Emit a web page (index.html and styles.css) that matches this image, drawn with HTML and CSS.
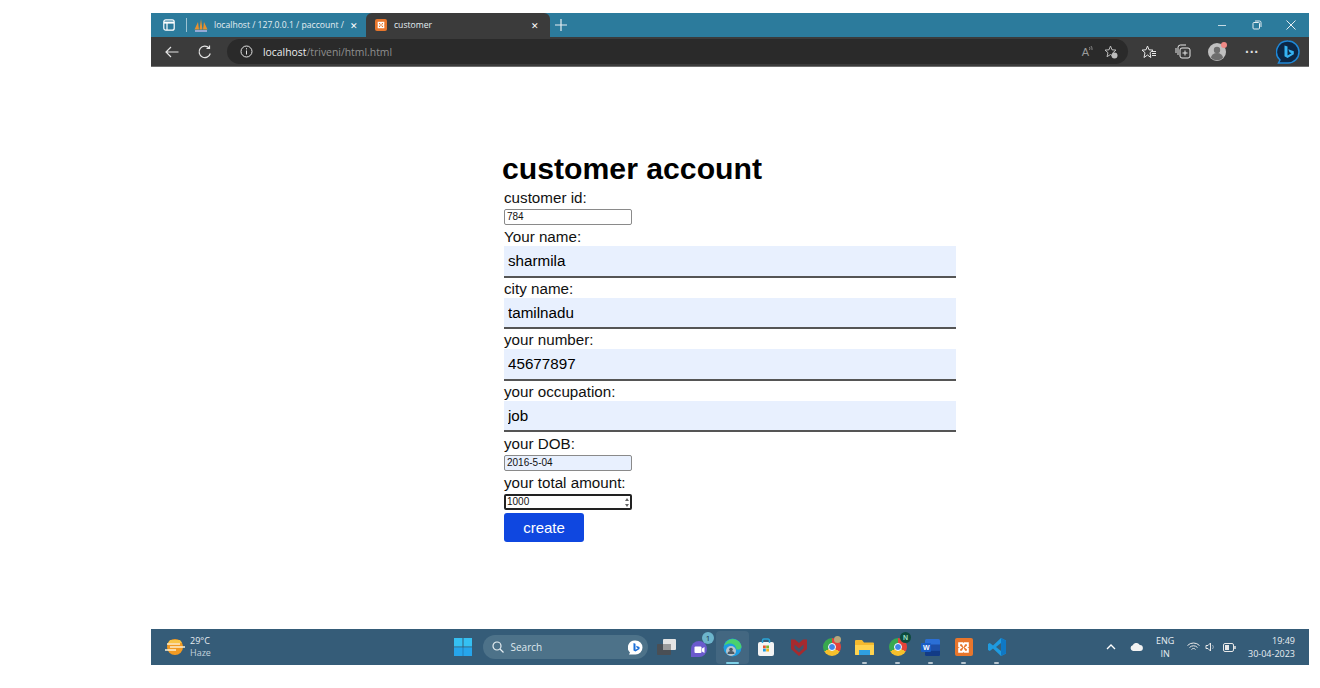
FILE: index.html

```html
<!DOCTYPE html>
<html lang="en">
<head>
  <meta charset="UTF-8">
  <title>customer</title>
  <link rel="stylesheet" href="styles.css">
</head>
<body>
  <div class="screen">
    <div class="tabstrip">
      <svg class="tab-actions" width="12" height="12" viewBox="0 0 12 12" fill="none" stroke="#fff" stroke-width="1.2"><rect x=".8" y=".8" width="10.4" height="10.4" rx="2"/><path d="M1 3.6h10" stroke-width="2"/><path d="M4 4v7"/></svg>
      <span class="tab-sep"></span>
      <div class="tab">
        <svg width="14" height="13" viewBox="0 0 14 13"><path d="M.5 10.500 4 3l1 7.500zM5.500 10.500 7 0l1.500 10.500zM9 10.500 10 3l3.500 7.500z" fill="#e8912d"/><path d="M1 12h12" stroke="#b9b9e8" stroke-width="1.500"/></svg>
        <span class="tab-title">localhost / 127.0.0.1 / paccount /</span>
        <span class="tab-close">✕</span>
      </div>
      <div class="tab tab-active">
        <span class="xampp xampp-small"><svg width="8" height="8" viewBox="0 0 12 12" fill="none" stroke="#fff" stroke-width="2"><path d="M2 2h3l1 2 1-2h3v3L8.500 6 10 7v3H7L6 8l-1 2H2V7l1.500-1L2 5z"/></svg></span>
        <span class="tab-title">customer</span>
        <span class="tab-close">✕</span>
      </div>
      <svg class="new-tab" width="12" height="12" viewBox="0 0 12 12" stroke="#e6eef2" stroke-width="1.200"><path d="M6 0v12M0 6h12"/></svg>
      <div class="win-controls">
        <svg width="10" height="10" viewBox="0 0 10 10" stroke="#c6dbe4"><path d="M1 5.500h8"/></svg>
        <svg width="10" height="10" viewBox="0 0 10 10" fill="none" stroke="#e6eef2"><rect x="1" y="2.500" width="6.500" height="6.500" rx="1"/><path d="M3 1h4.500A1.500 1.500 0 0 1 9 2.500V7"/></svg>
        <svg width="10" height="10" viewBox="0 0 10 10" stroke="#e6eef2"><path d="M.5.500l9 9M9.500.500l-9 9"/></svg>
      </div>
    </div>

    <div class="toolbar">
      <svg class="nav-back" width="14" height="12" viewBox="0 0 14 12" fill="none" stroke="#e4e4e4" stroke-width="1.200"><path d="M13.500 6H1M6 1 1 6l5 5"/></svg>
      <svg class="nav-reload" width="14" height="14" viewBox="0 0 14 14" fill="none" stroke="#e4e4e4" stroke-width="1.200"><path d="M12.300 8.500A5.700 5.700 0 1 1 11 3"/><path d="M11.500.500V3.500H8.500"/></svg>
      <div class="address">
        <svg width="13" height="13" viewBox="0 0 13 13" fill="none" stroke="#e4e4e4"><circle cx="6.500" cy="6.500" r="5.500"/><path d="M6.500 5.500v4M6.500 3.200v1.200"/></svg>
        <span class="url"><b>localhost</b>/triveni/html.html</span>
        <span class="read-aloud">A</span>
        <svg class="aloud-waves" width="4" height="7" viewBox="0 0 4 7" fill="none" stroke="#9a9a9a" stroke-width=".8"><path d="M.5 1a3 3 0 0 1 0 3M2 0a5 5 0 0 1 1 4"/></svg>
        <svg class="fav-add" width="14" height="14" viewBox="0 0 14 14" fill="none" stroke="#bdbdbd"><path d="M6.500 1 8 4.800l4 .3L9 7.700l.8 4-3.300-2.200L3 11.700l1-4L1 5.100l4-.3z"/><circle cx="10.500" cy="10.500" r="3" fill="#bdbdbd" stroke="none"/></svg>
      </div>
      <div class="tools">
        <svg width="16" height="14" viewBox="0 0 16 14" fill="none" stroke="#e8e8e8"><path d="M6.500 1 8 4.800l4 .3L9 7.700l.8 4.800-3.300-2.500L3 12.500l1-4.800L1 5.100l4-.3z"/><path d="M11 6.500h4M11 8.500h4M11 10.500h4"/></svg>
        <svg class="collections" width="16" height="15" viewBox="0 0 16 15" fill="none" stroke="#e8e8e8"><rect x="5" y="4" width="10" height="10" rx="2"/><path d="M10 6.500v5M7.500 9h5M3 11V3.500A2.500 2.500 0 0 1 5.500 1H11M1 9V4"/></svg>
        <span class="avatar"><svg width="18" height="18" viewBox="0 0 18 18"><circle cx="9" cy="9" r="9" fill="#bfbfbf"/><circle cx="9" cy="7" r="3.200" fill="#6d6d6d"/><path d="M3 15a6 5 0 0 1 12 0 9 9 0 0 1-12 0z" fill="#6d6d6d"/></svg><i class="avatar-dot"></i></span>
        <span class="dots">···</span>
        <svg class="bing" width="24" height="24" viewBox="0 0 24 24"><path d="M12 1a11 11 0 0 1 0 22H2.500l1.500-3A11 11 0 0 1 12 1z" fill="#0c2746" stroke="#1e88d8" stroke-width="1.500"/><path d="M8.500 5.500l3 1.100v9l4-2.300-2-1-1.200-3 5.500 2v3l-6.300 3.700-3-1.700z" fill="#35b4f4"/></svg>
      </div>
    </div>

    <main class="page">
      <form class="account-form">
        <h1>customer account</h1>
        <label class="field-label first">customer id:</label>
        <input class="small-input" type="text" value="784">
        <label class="field-label second">Your name:</label>
        <input class="wide-input" type="text" value="sharmila">
        <label class="field-label">city name:</label>
        <input class="wide-input" type="text" value="tamilnadu">
        <label class="field-label">your number:</label>
        <input class="wide-input" type="text" value="45677897">
        <label class="field-label">your occupation:</label>
        <input class="wide-input" type="text" value="job">
        <label class="field-label tall">your DOB:</label>
        <input class="small-input filled" type="text" value="2016-5-04">
        <label class="field-label tall">your total amount:</label>
        <div class="number-wrap">
          <input class="small-input focused" type="text" value="1000">
          <i class="spin-up"></i>
          <i class="spin-down"></i>
        </div>
        <button class="create-btn" type="button">create</button>
      </form>
    </main>

    <div class="taskbar">
      <div class="weather">
        <svg width="20" height="18" viewBox="0 0 20 18"><circle cx="10" cy="9" r="8" fill="#f29a22"/><path d="M5 2h10l2 3H3z" fill="#f8c548"/><path d="M2 6h13M5 9h15M0 12h11" stroke="#fdf0cf" stroke-width="1.300"/></svg>
        <div class="weather-text"><span>29°C</span><span class="dim">Haze</span></div>
      </div>

      <div class="task-items">
        <span class="task-item"><svg width="18" height="18" viewBox="0 0 18 18"><path d="M0 0h8.500v8.500H0zM9.500 0H18v8.500H9.500zM0 9.500h8.500V18H0zM9.500 9.500H18V18H9.500z" fill="#35c0f2"/><path d="M0 9.500h18V18H0z" fill="#1c93e6" opacity=".6"/></svg></span>
        <div class="search">
          <svg width="12" height="12" viewBox="0 0 12 12" fill="none" stroke="#e6eef2" stroke-width="1.200"><circle cx="5" cy="5" r="4"/><path d="m8 8 3.500 3.500"/></svg>
          <span>Search</span>
          <svg class="search-bing" width="15" height="15" viewBox="0 0 15 15"><path d="M7.500.500a7 7 0 0 1 0 14H1l1-2a7 7 0 0 1 5.500-12z" fill="#fff"/><path d="M5.500 3l2 .8v6l2.500-1.500-1.200-.6-.8-2 3.500 1.300v2L7.500 11.500l-2-1.100z" fill="#1b6fd8"/></svg>
        </div>
        <span class="task-item"><svg width="19" height="16" viewBox="0 0 19 16"><rect x="0" y="5" width="14" height="11" rx="1" fill="#4a4f55"/><rect x="6" y="0" width="13" height="11" rx="1" fill="#e4e4e4"/><rect x="6" y="5" width="8" height="6" fill="#9b9b9b"/></svg></span>
        <span class="task-item"><svg width="19" height="19" viewBox="0 0 19 19"><path d="M9 3a8 8 0 0 1 0 16H1V11a8 8 0 0 1 8-8z" fill="#6a5acd"/><rect x="4.500" y="8.500" width="7" height="6.500" rx="1" fill="#fff"/><path d="M12 10.500l2.500-1.500v6L12 13.500z" fill="#fff"/></svg><i class="teams-badge">1</i></span>
        <span class="task-item task-open"><svg width="19" height="19" viewBox="0 0 19 19"><circle cx="9.500" cy="9.500" r="9" fill="#1b9de2"/><path d="M1 8a9 9 0 0 1 17.500 0c0 3-2.500 4-5 3.500C13 7 9 4.500 4.500 6 3 6.500 2 7 1 8z" fill="#4bd16d"/><circle cx="8" cy="13" r="5" fill="#b9c4cc"/><circle cx="8" cy="11.500" r="1.800" fill="#4d5963"/><path d="M4.500 16a3.500 3 0 0 1 7 0z" fill="#4d5963"/></svg><i class="task-line wide"></i></span>
        <span class="task-item"><svg width="18" height="18" viewBox="0 0 18 18"><rect x="1" y="4" width="16" height="14" rx="2" fill="#f4f4f4"/><path d="M5.500 5V2.500A1.500 1.500 0 0 1 7 1h4a1.500 1.500 0 0 1 1.500 1.500V5" fill="none" stroke="#2aa5d8" stroke-width="1.500"/><path d="M6 7.500h2.800v2.800H6z" fill="#e8532e"/><path d="M9.200 7.500H12v2.800H9.200z" fill="#7ab52e"/><path d="M6 10.700h2.800v2.800H6z" fill="#1c9ce0"/><path d="M9.200 10.700H12v2.800H9.200z" fill="#f6b61c"/></svg></span>
        <span class="task-item"><svg width="16" height="17" viewBox="0 0 16 17"><path d="M0 .5h4l4 3.500 4-3.500h4V10l-8 7-8-7z" fill="#a62a2e"/><path d="M3.500 5.500 8 9.500l4.500-4V9.500L8 13.500 3.500 9.500z" fill="#41546c"/></svg></span>
        <span class="task-item"><span class="chrome-icon"><i></i></span><i class="chrome-pin"></i></span>
        <span class="task-item"><svg width="19" height="17" viewBox="0 0 19 17"><path d="M0 2a1 1 0 0 1 1-1h6l2 2.500h9a1 1 0 0 1 1 1V15a1 1 0 0 1-1 1H1a1 1 0 0 1-1-1z" fill="#f4b92e"/><path d="M0 6h19v9a1 1 0 0 1-1 1H1a1 1 0 0 1-1-1z" fill="#ffd34f"/><path d="M4 11h11v5H4z" fill="#2f9fe0"/></svg><i class="task-line"></i></span>
        <span class="task-item"><span class="chrome-icon"><i></i></span><i class="n-badge">N</i><i class="task-line"></i></span>
        <span class="task-item"><svg width="19" height="17" viewBox="0 0 19 17"><rect x="4" y="0" width="15" height="17" rx="1.500" fill="#2b6fd6"/><path d="M4 5.500h15v6H4z" fill="#1d4fa8"/><path d="M4 11.500h15V16a1 1 0 0 1-1 1H5a1 1 0 0 1-1-1z" fill="#123b86"/><rect x="0" y="4" width="10" height="9" rx="1" fill="#1a5dc4"/></svg><i class="word-w">W</i><i class="task-line"></i></span>
        <span class="task-item"><span class="xampp"><svg width="13" height="13" viewBox="0 0 12 12" fill="none" stroke="#fff" stroke-width="1.800"><path d="M2 2h3l1 2 1-2h3v3L8.500 6 10 7v3H7L6 8l-1 2H2V7l1.500-1L2 5z"/></svg></span><i class="task-line"></i></span>
        <span class="task-item"><svg width="18" height="18" viewBox="0 0 18 18"><path d="M13 0l5 2.500v13L13 18 5 10.500 1.800 13 0 12V6l1.800-1L5 7.500z" fill="#1f9be0"/><path d="M13 5 8 9l5 4z" fill="#35607a"/><path d="M13 0l5 2.500v13L13 18z" fill="#0f78c4"/></svg><i class="task-line"></i></span>
      </div>

      <div class="tray">
        <svg width="10" height="6" viewBox="0 0 10 6" fill="none" stroke="#fff" stroke-width="1.300"><path d="M1 5 5 1l4 4"/></svg>
        <svg class="cloud" width="13" height="8" viewBox="0 0 13 8"><path d="M3 8a3 3 0 0 1-.3-5.800A4 4 0 0 1 9.800 2 3 3 0 0 1 10 8z" fill="#f2f2f2"/></svg>
        <div class="lang"><span>ENG</span><span>IN</span></div>
        <svg class="wifi" width="13" height="10" viewBox="0 0 13 10" fill="none" stroke="#e8e8e8"><path d="M.5 3.500a8.500 8.500 0 0 1 12 0M2.500 5.500a5.500 5.500 0 0 1 8 0M4.500 7.500a2.500 2.500 0 0 1 4 0"/></svg>
        <svg width="11" height="10" viewBox="0 0 11 10" fill="none" stroke="#e8e8e8"><path d="M1 3.500h2L5.500 1v8L3 6.500H1z"/><path d="M7.500 3a3 3 0 0 1 0 4" stroke="#9ab"/></svg>
        <svg class="battery" width="13" height="9" viewBox="0 0 13 9" fill="none" stroke="#e8e8e8"><rect x=".5" y=".5" width="10" height="8" rx="1.500"/><rect x="2" y="2" width="4" height="5" fill="#e8e8e8" stroke="none"/><path d="M12 3v3" stroke-width="1.500"/></svg>
        <div class="clock"><span>19:49</span><span>30-04-2023</span></div>
      </div>
    </div>
  </div>
</body>
</html>
```

FILE: styles.css

```css
* { box-sizing: border-box; }
body { margin: 0; background: #fff; font-family: "Liberation Sans", Arial, sans-serif; overflow: hidden; }
.screen { width: 1158px; height: 652px; margin: 13px 0 0 151px; display: flex; flex-direction: column; }

/* browser chrome */
.tabstrip { height: 24px; background: #2c7b9c; display: flex; align-items: center; color: #e4eef2; font-family: "Open Sans", sans-serif; font-size: 8.600px; }
.tab-actions { margin-left: 12px; }
.tab-sep { width: 1px; height: 14px; background: #9cc2d2; margin: 0 7px 0 11px; }
.tab { display: flex; align-items: center; height: 24px; }
.tab:first-of-type { width: 171px; }
.tab .tab-title { margin-left: 6px; white-space: nowrap; width: 130px; }
.tab .tab-close { font-size: 9px; margin-left: 6px; color: #fff; }
.tab-active { width: 184px; background: #3b3b3b; border-radius: 6px 6px 0 0; padding-left: 9px; margin-left: 1px; }
.tab-active .tab-title { margin-left: 7px; width: 136px; }
.tab-active .tab-close { margin-left: 1px; }
.new-tab { margin-left: 5px; }
.win-controls { margin-left: auto; width: 92px; display: flex; justify-content: space-between; padding-right: 13px; }

.toolbar { height: 30px; background: #3b3b3b; border-bottom: 1px solid #6e6e6e; display: flex; align-items: center; color: #e4e4e4; }
.nav-back { margin-left: 14px; }
.nav-reload { margin-left: 19px; }
.address { width: 901px; height: 25px; margin-left: 15px; background: #2a2a2a; border-radius: 13px; display: flex; align-items: center; padding-left: 13px; }
.url { margin-left: 10px; font-family: "Open Sans", sans-serif; font-size: 10.400px; color: #8f8f8f; }
.url b { font-weight: 400; color: #ececec; }
.read-aloud { margin-left: auto; color: #9a9a9a; font-size: 11px; }
.aloud-waves { margin: -5px 0 0 0; }
.fav-add { margin: 0 10px 0 11px; }
.tools { flex: 1; display: flex; align-items: center; padding-left: 13px; gap: 17px; }
.collections { margin-left: 1px; }
.avatar { position: relative; display: flex; }
.avatar-dot { position: absolute; top: -1px; right: -1px; width: 6px; height: 6px; border-radius: 50%; background: #f08a86; }
.dots { width: 16px; margin-left: 1px; text-align: center; font-size: 14px; font-weight: 700; color: #ddd; }
.bing { margin-left: -1px; }

/* form */
.page { flex: 1; padding: 84px 0 0 351px; background: #fff; }
.account-form { display: flex; flex-direction: column; align-items: flex-start; }
.account-form h1 { margin: 0; font-size: 30.200px; line-height: 36px; font-weight: 700; color: #000; }
.field-label { margin-left: 2px; height: 20px; line-height: 22px; font-size: 15.200px; color: #111; }
.field-label.first { height: 22px; line-height: 21px; }
.field-label.second { height: 21px; line-height: 23px; }
.field-label.tall { height: 23px; line-height: 24px; }
.small-input { display: block; margin-left: 2px; width: 128px; height: 16px; padding: 0 2px 2px; border: 1px solid #8a8a8a; border-radius: 2px; background: #fff; font: 10px "Liberation Sans", sans-serif; color: #111; }
.small-input.filled { background: #e8f0fe; }
.small-input.focused { border: 2px solid #222; padding: 0 1px 2px; }
.number-wrap { position: relative; }
.spin-up, .spin-down { position: absolute; right: 3px; width: 0; height: 0; border-left: 2px solid transparent; border-right: 2px solid transparent; }
.spin-up { top: 4px; border-bottom: 3px solid #666; }
.spin-down { bottom: 3px; border-top: 3px solid #666; }
.wide-input { margin-left: 2px; width: 452px; height: 31.500px; padding: 0 4px; border: 0; border-bottom: 2px solid #555; background: #e8f0fe; font: 15.200px "Liberation Sans", sans-serif; color: #000; }
.create-btn { margin: 3px 0 0 2px; width: 80px; height: 29px; border: 0; border-radius: 3px; background: #0f47e0; color: #fff; font: 15px "Liberation Sans", sans-serif; }

/* taskbar */
.taskbar { height: 36px; background: #355c78; display: flex; align-items: center; color: #e8eef2; font-family: "Open Sans", sans-serif; font-size: 9px; position: relative; }
.weather { width: 295px; padding-left: 14px; display: flex; align-items: center; gap: 5px; line-height: 12px; }
.weather-text { display: flex; flex-direction: column; }
.dim { color: #c4d2dc; }
.task-items { display: flex; align-items: center; height: 36px; }
.task-item { position: relative; width: 33px; height: 33px; display: flex; align-items: center; justify-content: center; }
.task-open { background: rgba(255, 255, 255, .07); border-radius: 4px; }
.search { width: 165px; height: 24px; margin: 0 2.500px 0 3.500px; padding: 0 5px 0 9px; border-radius: 12px; background: #4d7289; display: flex; align-items: center; gap: 7px; font-size: 10px; color: #dfe8ed; }
.search-bing { margin-left: auto; }
.teams-badge { position: absolute; top: 1px; right: 2px; width: 12px; height: 12px; border-radius: 50%; background: #6db5cc; color: #16303f; font: 8px/12px "Open Sans", sans-serif; text-align: center; }
.task-line { position: absolute; bottom: 0; left: 14px; width: 5px; height: 2px; border-radius: 1px; background: #b7c6d0; }
.task-line.wide { left: 10px; width: 13px; background: #7fd0e6; }
.xampp { width: 18px; height: 18px; border-radius: 2px; background: #e8762c; display: flex; align-items: center; justify-content: center; }
.xampp-small { width: 12px; height: 12px; }
.chrome-icon { width: 18px; height: 18px; border-radius: 50%; background: conic-gradient(#e4433a 0 120deg, #f6c02c 120deg 240deg, #38a84f 240deg 360deg); display: flex; align-items: center; justify-content: center; }
.chrome-icon i { width: 8px; height: 8px; border-radius: 50%; background: #3f86e8; border: 1px solid #fff; }
.chrome-pin { position: absolute; top: 5px; right: 7px; width: 7px; height: 7px; border-radius: 50%; background: #b7a77a; }
.n-badge { position: absolute; top: 1px; right: 3px; width: 11px; height: 11px; border-radius: 50%; background: #0d4a3c; color: #9fe0c4; font: 700 7px/11px "Liberation Sans", sans-serif; text-align: center; }
.word-w { position: absolute; left: 9px; top: 13px; color: #fff; font: 700 7px/8px "Liberation Sans", sans-serif; }
.tray { position: absolute; left: 955px; right: 0; top: 0; height: 36px; display: flex; align-items: center; gap: 9px; padding-right: 14px; }
.cloud { margin-left: 4.500px; }
.lang { display: flex; flex-direction: column; align-items: center; line-height: 13px; margin: 0 3.500px 0 4.500px; }
.wifi { margin-right: -4px; }
.battery { margin-left: -2px; }
.clock { margin-left: auto; display: flex; flex-direction: column; align-items: flex-end; line-height: 13px; white-space: nowrap; }
```
